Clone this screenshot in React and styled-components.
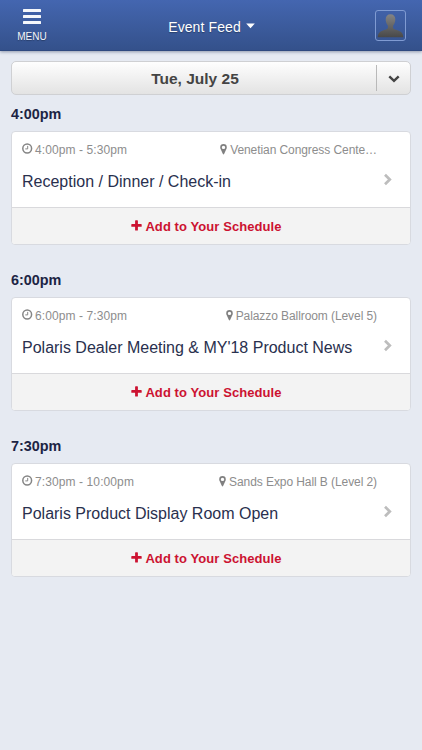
import { createGlobalStyle, styled } from 'styled-components';

const GlobalStyle = createGlobalStyle`
  * {
    box-sizing: border-box;
  }
  body {
    margin: 0;
    background: #e6eaf2;
    font-family: 'Liberation Sans', Arial, sans-serif;
  }
  svg {
    display: block;
    flex: none;
  }
`;

const Page = styled.div`
  min-height: 750px;
  background: #e6eaf2;
`;

const Header = styled.header`
  display: grid;
  grid-template-columns: 64px 1fr 64px;
  height: 51px;
  background: linear-gradient(#4466b0, #34518b);
  border-bottom: 1px solid #2f4a80;
  box-shadow: 0 1px 3px rgba(40, 55, 90, 0.45);
  color: #fff;
`;

const MenuButton = styled.button`
  display: flex;
  flex-direction: column;
  align-items: center;
  gap: 7px;
  padding: 9px 0 0;
  border: 0;
  background: none;
  color: #f4f6fb;
  font-family: inherit;
  font-size: 10px;
  line-height: 12px;
  text-shadow: 0 1px 1px rgba(0, 0, 0, 0.3);
`;

const HeaderTitle = styled.div`
  display: flex;
  justify-content: center;
  gap: 5px;
  padding: 18px 0 0 1px;
  font-size: 14px;
  letter-spacing: 0.1px;
  line-height: 18px;
  text-shadow: 0 1px 1px rgba(0, 0, 0, 0.3);
  svg {
    margin-top: 5px;
  }
`;

const Avatar = styled.div`
  width: 31px;
  height: 31px;
  margin: 10px 0 0 17px;
  padding: 1px;
  border: 1px solid #809bd2;
  border-radius: 3px;
`;

const Content = styled.main`
  padding: 10px 11px 0;
`;

const DateBar = styled.div`
  display: flex;
  align-items: center;
  height: 34px;
  border: 1px solid #cfd0d3;
  border-radius: 5px;
  background: linear-gradient(#fefefe, #e3e3e3);
`;

const DateLabel = styled.div`
  flex: 1;
  padding: 1px 0 0 2px;
  color: #444;
  font-size: 15.5px;
  font-weight: bold;
  line-height: 20px;
  text-align: center;
`;

const DateToggle = styled.div`
  display: flex;
  align-items: center;
  justify-content: center;
  width: 34px;
  height: 26px;
  padding-top: 1px;
  border-left: 1px solid #b9b9b9;
`;

const TimeHeading = styled.h2`
  margin: 0;
  padding-top: 9px;
  height: 36px;
  color: #1c2444;
  font-size: 14.4px;
  line-height: 20px;
`;

const Card = styled.article`
  height: 114px;
  margin-bottom: 16px;
  border: 1px solid #d8dae0;
  border-radius: 4px;
  background: #fff;
  overflow: hidden;
`;

const CardBody = styled.div`
  height: 75px;
  padding: 10px 17px 0 10px;
`;

const Meta = styled.div`
  display: flex;
  justify-content: space-between;
  padding-right: 16px;
  color: #8d8d8d;
  font-size: 12px;
  line-height: 16px;
`;

const MetaItem = styled.div`
  display: flex;
  gap: ${(props) => (props.$place ? '3px' : '2px')};
  letter-spacing: ${(props) => (props.$place ? '-0.08px' : '0.1px')};
  svg {
    margin-top: ${(props) => (props.$place ? '2px' : '1px')};
  }
`;

const TitleRow = styled.div`
  display: flex;
  justify-content: space-between;
  padding-top: 14px;
  svg {
    margin-top: 1px;
  }
`;

const Title = styled.div`
  color: #29304e;
  font-size: 16px;
  line-height: 20px;
  white-space: nowrap;
`;

const AddButton = styled.button`
  display: flex;
  justify-content: center;
  gap: 3px;
  width: 100%;
  height: 38px;
  padding: 11px 9px 0 0;
  border: 0;
  border-top: 1px solid #d9d9dc;
  background: #f3f3f3;
  color: #cc1231;
  font-family: inherit;
  font-size: 13px;
  font-weight: bold;
  letter-spacing: 0.08px;
  line-height: 16px;
  svg {
    margin-top: 1px;
  }
`;

const events = [
  {
    start: '4:00pm',
    time: '4:00pm - 5:30pm',
    place: 'Venetian Congress Cente…',
    title: 'Reception / Dinner / Check-in',
  },
  {
    start: '6:00pm',
    time: '6:00pm - 7:30pm',
    place: 'Palazzo Ballroom (Level 5)',
    title: "Polaris Dealer Meeting & MY'18 Product News",
  },
  {
    start: '7:30pm',
    time: '7:30pm - 10:00pm',
    place: 'Sands Expo Hall B (Level 2)',
    title: 'Polaris Product Display Room Open',
  },
];

function ClockIcon() {
  return (
    <svg width="11" height="11" viewBox="0 0 11 11" fill="none" stroke="#858585">
      <circle cx="5.2" cy="5.5" r="4.4" strokeWidth="1.5" />
      <path d="M5.7 2.9v3H3.3" strokeWidth="1" />
    </svg>
  );
}

function PinIcon() {
  return (
    <svg width="7" height="11" viewBox="0 0 7 11">
      <path
        fill="#808080"
        fillRule="evenodd"
        d="M3.5.1a3.3 3.3 0 0 1 3.3 3.3c0 .6-.1 1-.3 1.4L4.1 10c-.2.5-1 .5-1.2 0L.5 4.8C.3 4.4.2 4 .2 3.4A3.3 3.3 0 0 1 3.5.1zm0 1.6a1.7 1.7 0 1 0 0 3.4 1.7 1.7 0 0 0 0-3.4z"
      />
    </svg>
  );
}

function PlusIcon() {
  return (
    <svg width="11" height="11" viewBox="0 0 11 11">
      <path
        fill="#cc1231"
        d="M4.7.3h1.6q.6 0 .6.6v3.2h3.2q.6 0 .6.6v1.5q0 .6-.6.6H6.9V10q0 .6-.6.6H4.7q-.6 0-.6-.6V6.8H.9q-.6 0-.6-.6V4.7q0-.6.6-.6h3.2V.9q0-.6.6-.6z"
      />
    </svg>
  );
}

function EventCard({ event }) {
  return (
    <section>
      <TimeHeading>{event.start}</TimeHeading>
      <Card>
        <CardBody>
          <Meta>
            <MetaItem>
              <ClockIcon />
              <span>{event.time}</span>
            </MetaItem>
            <MetaItem $place>
              <PinIcon />
              <span>{event.place}</span>
            </MetaItem>
          </Meta>
          <TitleRow>
            <Title>{event.title}</Title>
            <svg width="10" height="13" viewBox="0 0 10 13" fill="none">
              <path d="M2 1.7l4.8 4.8L2 11.3" stroke="#bdbdbd" strokeWidth="2.7" />
            </svg>
          </TitleRow>
        </CardBody>
        <AddButton>
          <PlusIcon />
          <span>Add to Your Schedule</span>
        </AddButton>
      </Card>
    </section>
  );
}

export default function App() {
  return (
    <Page>
      <GlobalStyle />
      <Header>
        <MenuButton>
          <svg width="18" height="15" viewBox="0 0 18 15" fill="#f5f7fb">
            <rect width="18" height="3" rx="0.6" />
            <rect y="6" width="18" height="3" rx="0.6" />
            <rect y="12" width="18" height="3" rx="0.6" />
          </svg>
          <span>MENU</span>
        </MenuButton>
        <HeaderTitle>
          <span>Event Feed</span>
          <svg width="9" height="6" viewBox="0 0 9 6">
            <path d="M.2.5h8.6L4.5 5.3z" fill="#fff" />
          </svg>
        </HeaderTitle>
        <Avatar>
          <svg width="27" height="27" viewBox="0 0 27 27">
            <defs>
              <linearGradient id="person" x1="0" y1="0" x2="0" y2="1">
                <stop offset="0" stopColor="#858585" />
                <stop offset="1" stopColor="#484848" />
              </linearGradient>
            </defs>
            <path
              fill="url(#person)"
              d="M13.5 2.2c3.1 0 4.8 2 4.8 5.1 0 2.6-.8 4.7-2.1 6.1-.3 1.6-.2 2.8.5 3.4 1.3 1.1 4.4 1.3 7 3 1.7 1.1 2.5 2.9 2.6 5.5H.7c.1-2.6.9-4.4 2.6-5.5 2.6-1.7 5.7-1.9 7-3 .7-.6.8-1.8.5-3.4-1.3-1.4-2.1-3.5-2.1-6.1 0-3.1 1.7-5.1 4.8-5.1z"
            />
          </svg>
        </Avatar>
      </Header>
      <Content>
        <DateBar>
          <DateLabel>Tue, July 25</DateLabel>
          <DateToggle>
            <svg width="12" height="8" viewBox="0 0 12 8" fill="none">
              <path d="M1.3 1.3L6 5.9l4.7-4.6" stroke="#444" strokeWidth="2.4" />
            </svg>
          </DateToggle>
        </DateBar>
        {events.map((event) => (
          <EventCard key={event.start} event={event} />
        ))}
      </Content>
    </Page>
  );
}
